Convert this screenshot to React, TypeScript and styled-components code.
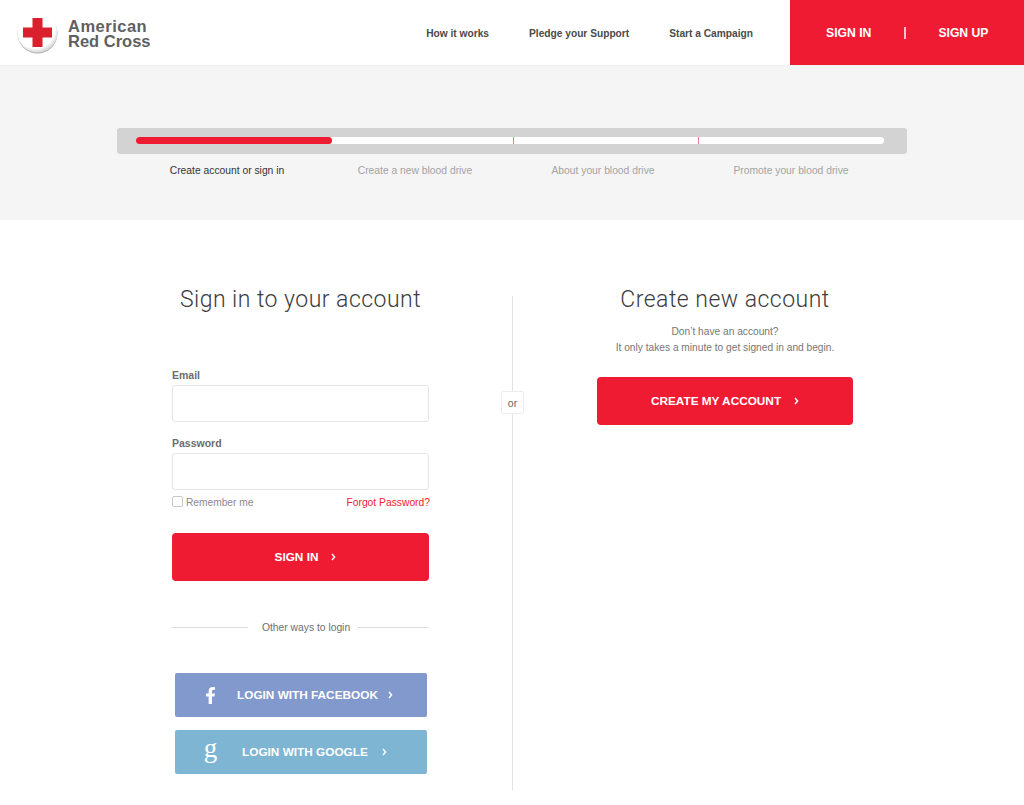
import React from 'react';
import styled, { createGlobalStyle } from 'styled-components';
import { FaFacebookF } from 'react-icons/fa';

const red = '#ee1b33';

const GlobalStyle = createGlobalStyle`
  html, body {
    margin: 0;
    padding: 0;
    background: #fff;
    font-family: "Liberation Sans", Arial, sans-serif;
    -webkit-font-smoothing: antialiased;
  }
  * { box-sizing: border-box; }
`;

const Page = styled.div`
  width: 1024px;
  height: 805px;
  overflow: hidden;
  display: flex;
  flex-direction: column;
`;

const Header = styled.header`
  height: 66px;
  display: flex;
  align-items: flex-start;
  background: #fff;
  border-bottom: 1px solid #f0f0f0;
`;

const Logo = styled.a`
  display: flex;
  align-items: center;
  gap: 10px;
  height: 65px;
  padding: 1px 0 0 17px;
`;

const LogoText = styled.span`
  display: flex;
  flex-direction: column;
  font-size: 16.5px;
  line-height: 15px;
  font-weight: 700;
  color: #5f6062;
  margin-top: 2px;
`;

const LogoLine = styled.span<{ $spacing: number }>`
  letter-spacing: ${(p) => p.$spacing}px;
  white-space: nowrap;
`;

const Nav = styled.nav`
  margin-left: auto;
  margin-right: 37px;
  height: 65px;
  padding-top: 1px;
  display: flex;
  align-items: center;
  gap: 40px;
`;

const NavLink = styled.a`
  font-size: 10.2px;
  font-weight: 700;
  color: #4a4a4a;
  white-space: nowrap;
`;

const AuthBlock = styled.div`
  width: 234px;
  height: 65px;
  background: ${red};
  display: flex;
  align-items: center;
  padding: 1px 0 0 36px;
  color: #fff;
  font-size: 12.2px;
  font-weight: 700;
`;

const AuthDivider = styled.span`
  width: 2px;
  height: 12px;
  background: #f7c3c9;
  margin: 0 32px 0 33px;
`;

const ProgressSection = styled.section`
  height: 154px;
  flex-shrink: 0;
  background: #f5f5f5;
  padding-top: 62px;
`;

const Track = styled.div`
  width: 790px;
  height: 26px;
  margin-left: 117px;
  padding: 9px 23px 10px 19px;
  background: #d3d3d3;
  border-radius: 3px;
`;

const TrackInner = styled.div`
  position: relative;
  height: 7px;
  background: #fff;
  border-radius: 4px;
`;

const TrackFill = styled.div`
  width: 196px;
  height: 100%;
  background: ${red};
  border-radius: 4px;
`;

const Tick = styled.span<{ $left: number }>`
  position: absolute;
  top: 0;
  bottom: 0;
  left: ${(p) => p.$left}px;
  width: 1px;
  background: #ea7d8b;
`;

const StepLabels = styled.div`
  width: 752px;
  margin: 10px 0 0 133px;
  display: grid;
  grid-template-columns: repeat(4, 1fr);
`;

const StepLabel = styled.span<{ $active?: boolean }>`
  text-align: center;
  font-size: 10.3px;
  line-height: 14px;
  color: ${(p) => (p.$active ? '#333' : '#a3a3a3')};
`;

const Main = styled.main`
  flex: 1;
  display: flex;
  padding: 66px 0 0 172px;
  background: #fff;
`;

const LeftColumn = styled.section`
  width: 257px;
  flex-shrink: 0;
  display: flex;
  flex-direction: column;
`;

const RightColumn = styled.section`
  width: 256px;
  flex-shrink: 0;
  margin-left: 84px;
  display: flex;
  flex-direction: column;
  align-items: center;
`;

const Separator = styled.div`
  position: relative;
  width: 1px;
  height: 494px;
  flex-shrink: 0;
  margin: 10px 0 0 83px;
  background: #e2e2e2;
`;

const OrBadge = styled.span`
  position: absolute;
  top: 95px;
  left: -11px;
  width: 23px;
  height: 23px;
  display: flex;
  align-items: center;
  justify-content: center;
  background: #fff;
  border: 1px solid #ececec;
  border-radius: 2px;
  font-size: 10.5px;
  color: #666;
`;

const Title = styled.h2`
  margin: 0;
  height: 28px;
  font-family: Roboto, "Liberation Sans", sans-serif;
  font-weight: 300;
  font-size: 23px;
  line-height: 28px;
  letter-spacing: 0.48px;
  color: #3c3c3c;
  text-align: center;
  white-space: nowrap;
`;

const FieldLabel = styled.label<{ $top: number }>`
  display: block;
  margin-top: ${(p) => p.$top}px;
  font-size: 10.5px;
  line-height: 14px;
  font-weight: 700;
  color: #6d6d6d;
`;

const TextInput = styled.input`
  display: block;
  width: 257px;
  height: 37px;
  margin-top: 3px;
  background: #fff;
  border: 1px solid #e6e6e6;
  border-radius: 3px;
  outline: none;
`;

const OptionsRow = styled.div`
  height: 14px;
  margin-top: 5px;
  display: flex;
  align-items: center;
  justify-content: space-between;
`;

const Remember = styled.label`
  display: flex;
  align-items: center;
  gap: 3px;
  font-size: 10.2px;
  color: #8a8a8a;
`;

const CheckBox = styled.input`
  appearance: none;
  width: 11px;
  height: 11px;
  margin: 0 0 1px;
  background: #fff;
  border: 1px solid #c9c9c9;
  border-radius: 2px;
`;

const Forgot = styled.a`
  font-size: 10.3px;
  color: ${red};
  margin-right: -1px;
`;

const RedButton = styled.button<{ $top: number; $gap: number; $shift: number }>`
  width: 100%;
  height: 48px;
  margin-top: ${(p) => p.$top}px;
  padding: 0 0 0 ${(p) => p.$shift}px;
  display: flex;
  align-items: center;
  justify-content: center;
  gap: ${(p) => p.$gap}px;
  background: ${red};
  border: none;
  border-radius: 4px;
  color: #fff;
  font-family: inherit;
  font-size: 11.8px;
  font-weight: 700;
`;

const OtherWays = styled.div`
  height: 14px;
  margin-top: 39px;
  display: flex;
  align-items: center;
  font-size: 10.3px;
  color: #6f6f6f;
`;

const OtherLabel = styled.span`
  margin: 0 8px 0 14px;
  white-space: nowrap;
`;

const OtherLine = styled.span<{ $width: number }>`
  width: ${(p) => p.$width}px;
  height: 1px;
  background: #dcdcdc;
`;

const SocialButton = styled.button<{ $color: string; $top: number }>`
  width: 252px;
  height: 44px;
  margin: ${(p) => p.$top}px 0 0 3px;
  padding: 0 0 0 30px;
  display: flex;
  align-items: center;
  background: ${(p) => p.$color};
  border: none;
  border-radius: 2px;
  color: #fff;
  font-family: inherit;
  font-size: 11.8px;
  font-weight: 700;
  white-space: nowrap;
`;

const SocialIcon = styled.span`
  width: 11px;
  display: flex;
  justify-content: center;
  margin-right: 21px;
`;

const SocialLabel = styled.span<{ $left: number; $right: number }>`
  margin: 0 ${(p) => p.$right}px 0 ${(p) => p.$left}px;
`;

const GoogleGlyph = styled.span`
  font-family: "Liberation Serif", serif;
  font-size: 27px;
  line-height: 27px;
  font-weight: 400;
  margin-top: -8px;
`;

const Intro = styled.p`
  margin: 10px 0 0;
  font-size: 10.2px;
  line-height: 16px;
  color: #777;
  text-align: center;
  white-space: nowrap;
`;

const Chevron = () => (
  <svg width="5" height="8" viewBox="0 0 5 8" fill="none">
    <path d="M1 1l2.600 3L1 7" stroke="#fff" strokeWidth="1.4" />
  </svg>
);

const RedCrossLogo = () => (
  <svg width="41" height="44" viewBox="0 0 41 44">
    <defs>
      <radialGradient id="disc" cx="0.45" cy="0.4" r="0.65">
        <stop offset="0.75" stopColor="#ffffff" />
        <stop offset="1" stopColor="#c4c4c4" />
      </radialGradient>
    </defs>
    <circle cx="20.5" cy="22.5" r="20" fill="#b4b4b4" />
    <circle cx="20.5" cy="21.5" r="20" fill="url(#disc)" />
    <path d="M15.500 7h10v9.500h9.500v10h-9.500V36h-10v-9.500H6v-10h9.500z" fill="#d9202c" />
  </svg>
);

const App: React.FC = () => {
  return (
    <>
      <GlobalStyle />
      <Page>
        <Header>
          <Logo>
            <RedCrossLogo />
            <LogoText>
              <LogoLine $spacing={0.5}>American</LogoLine>
              <LogoLine $spacing={0}>Red Cross</LogoLine>
            </LogoText>
          </Logo>
          <Nav>
            <NavLink>How it works</NavLink>
            <NavLink>Pledge your Support</NavLink>
            <NavLink>Start a Campaign</NavLink>
          </Nav>
          <AuthBlock>
            <span>SIGN IN</span>
            <AuthDivider />
            <span>SIGN UP</span>
          </AuthBlock>
        </Header>

        <ProgressSection>
          <Track>
            <TrackInner>
              <TrackFill />
              <Tick $left={377} />
              <Tick $left={562} />
            </TrackInner>
          </Track>
          <StepLabels>
            <StepLabel $active>Create account or sign in</StepLabel>
            <StepLabel>Create a new blood drive</StepLabel>
            <StepLabel>About your blood drive</StepLabel>
            <StepLabel>Promote your blood drive</StepLabel>
          </StepLabels>
        </ProgressSection>

        <Main>
          <LeftColumn>
            <Title>Sign in to your account</Title>
            <FieldLabel $top={54}>Email</FieldLabel>
            <TextInput type="text" />
            <FieldLabel $top={14}>Password</FieldLabel>
            <TextInput type="password" />
            <OptionsRow>
              <Remember>
                <CheckBox type="checkbox" />
                Remember me
              </Remember>
              <Forgot>Forgot Password?</Forgot>
            </OptionsRow>
            <RedButton $top={24} $gap={13} $shift={10}>
              SIGN IN <Chevron />
            </RedButton>
            <OtherWays>
              <OtherLine $width={76} />
              <OtherLabel>Other ways to login</OtherLabel>
              <OtherLine $width={70} />
            </OtherWays>
            <SocialButton $color="#8299cd" $top={39}>
              <SocialIcon>
                <FaFacebookF size={17} />
              </SocialIcon>
              <SocialLabel $left={0} $right={10}>LOGIN WITH FACEBOOK</SocialLabel>
              <Chevron />
            </SocialButton>
            <SocialButton $color="#7eb5d3" $top={13}>
              <SocialIcon>
                <GoogleGlyph>g</GoogleGlyph>
              </SocialIcon>
              <SocialLabel $left={5} $right={14}>LOGIN WITH GOOGLE</SocialLabel>
              <Chevron />
            </SocialButton>
          </LeftColumn>

          <Separator>
            <OrBadge>or</OrBadge>
          </Separator>

          <RightColumn>
            <Title>Create new account</Title>
            <Intro>
              Don’t have an account?
              <br />
              It only takes a minute to get signed in and begin.
            </Intro>
            <RedButton $top={21} $gap={13} $shift={0}>
              CREATE MY ACCOUNT <Chevron />
            </RedButton>
          </RightColumn>
        </Main>
      </Page>
    </>
  );
};

export default App;
